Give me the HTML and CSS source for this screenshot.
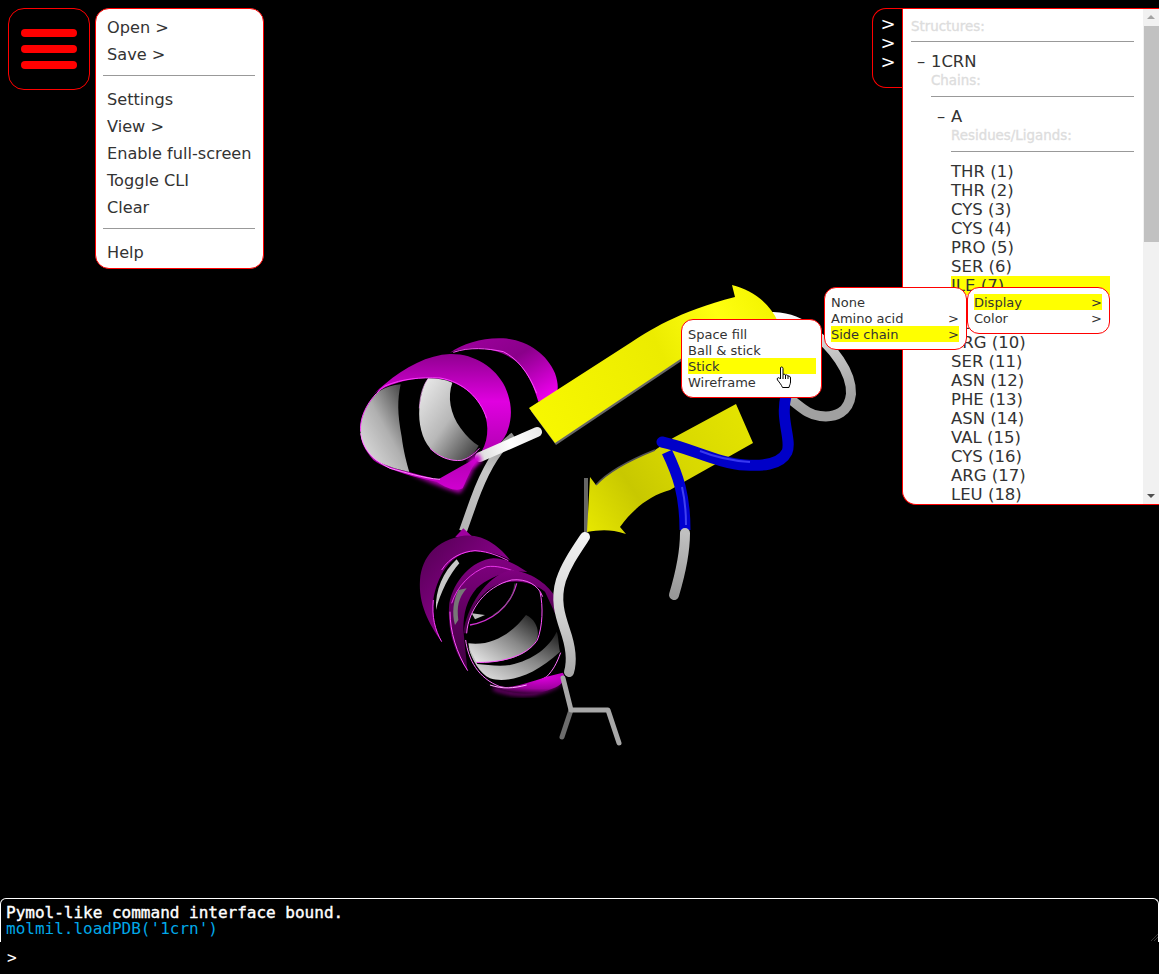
FILE: index.html
```html
<!DOCTYPE html>
<html lang="en">
<head>
<meta charset="utf-8">
<title>Molmil</title>
<link rel="stylesheet" href="styles.css">
</head>
<body>
<div class="app">
  <svg class="viewport" width="1159" height="974" viewBox="0 0 1159 974" aria-hidden="true">
    <defs>
      <filter id="soft" x="-30%" y="-30%" width="160%" height="160%"><feGaussianBlur stdDeviation="7"/></filter>
      <filter id="soft2" x="-10%" y="-10%" width="120%" height="120%"><feGaussianBlur stdDeviation="2"/></filter>
      <linearGradient id="gYel1" x1="529" y1="420" x2="770" y2="300" gradientUnits="userSpaceOnUse">
        <stop offset="0" stop-color="#f8f800"/><stop offset=".55" stop-color="#ecec00"/><stop offset=".8" stop-color="#ffff10"/><stop offset="1" stop-color="#f4f400"/>
      </linearGradient>
      <linearGradient id="gYel2" x1="590" y1="530" x2="750" y2="420" gradientUnits="userSpaceOnUse">
        <stop offset="0" stop-color="#e6e600"/><stop offset=".3" stop-color="#c8c800"/><stop offset=".6" stop-color="#d8d800"/><stop offset="1" stop-color="#e4e400"/>
      </linearGradient>
      <linearGradient id="gMag1" x1="0" y1="0" x2="1" y2="1">
        <stop offset="0" stop-color="#a000a0"/><stop offset=".45" stop-color="#8a008a"/><stop offset="1" stop-color="#ff00ff"/>
      </linearGradient>
      <linearGradient id="gMag2" x1="0" y1="0" x2="0" y2="1">
        <stop offset="0" stop-color="#900090"/><stop offset=".35" stop-color="#e000e0"/><stop offset=".75" stop-color="#b000b0"/><stop offset="1" stop-color="#d000d0"/>
      </linearGradient>
      <linearGradient id="gMagDark" x1="0" y1="0" x2="0" y2="1">
        <stop offset="0" stop-color="#800080"/><stop offset=".5" stop-color="#600060"/><stop offset="1" stop-color="#400040"/>
      </linearGradient>
      <linearGradient id="gMagDark2" x1="0" y1="0" x2="1" y2="1">
        <stop offset="0" stop-color="#500050"/><stop offset=".6" stop-color="#8a008a"/><stop offset="1" stop-color="#500050"/>
      </linearGradient>
      <radialGradient id="gMagBot" cx=".7" cy=".2" r=".8">
        <stop offset="0" stop-color="#e000e0"/><stop offset=".7" stop-color="#a000a0"/><stop offset="1" stop-color="#400040"/>
      </radialGradient>
      <linearGradient id="gW1" x1="0" y1="1" x2="1" y2="0">
        <stop offset="0" stop-color="#e8e8e8"/><stop offset=".5" stop-color="#b0b0b0"/><stop offset="1" stop-color="#303030"/>
      </linearGradient>
      <linearGradient id="gW2" x1="0" y1="0" x2="1" y2="1">
        <stop offset="0" stop-color="#eeeeee"/><stop offset=".5" stop-color="#b8b8b8"/><stop offset="1" stop-color="#303030"/>
      </linearGradient>
      <linearGradient id="gW3" x1="0" y1="1" x2="1" y2="0">
        <stop offset="0" stop-color="#f0f0f0"/><stop offset=".55" stop-color="#888"/><stop offset="1" stop-color="#181818"/>
      </linearGradient>
      <linearGradient id="gTube" x1="587" y1="535" x2="570" y2="675" gradientUnits="userSpaceOnUse">
        <stop offset="0" stop-color="#f4f4f4"/><stop offset=".6" stop-color="#d0d0d0"/><stop offset="1" stop-color="#a8a8a8"/>
      </linearGradient>
      <linearGradient id="gLoop" x1="775" y1="315" x2="800" y2="410" gradientUnits="userSpaceOnUse">
        <stop offset="0" stop-color="#ffffff"/><stop offset=".5" stop-color="#c8c8c8"/><stop offset="1" stop-color="#a0a0a0"/>
      </linearGradient>
      <linearGradient id="gEnd" x1="685" y1="533" x2="674" y2="595" gradientUnits="userSpaceOnUse">
        <stop offset="0" stop-color="#c0c0c0"/><stop offset="1" stop-color="#989898"/>
      </linearGradient>
      <linearGradient id="gWhite" x1="480" y1="457" x2="542" y2="430" gradientUnits="userSpaceOnUse">
        <stop offset="0" stop-color="#dddddd"/><stop offset=".5" stop-color="#ffffff"/><stop offset="1" stop-color="#e8e8e8"/>
      </linearGradient>
      <linearGradient id="gStem" x1="510" y1="437" x2="463" y2="530" gradientUnits="userSpaceOnUse">
        <stop offset="0" stop-color="#8c8c8c"/><stop offset=".4" stop-color="#c8c8c8"/><stop offset="1" stop-color="#b4b4b4"/>
      </linearGradient>
    </defs>

    <!-- loop and gray connectors -->
    <path d="M773 317 C790 318 800 322 812 332 C832 346 852 372 851 394 C849 412 836 418 820 416 C808 415 800 406 790 399" fill="none" stroke="url(#gLoop)" stroke-width="10" stroke-linecap="round"/>
    <path d="M514 436 C494 450 482 478 474 500 L463 531" fill="none" stroke="url(#gStem)" stroke-width="8"/>

    <!-- upper helix, zoom coordinates -->
    <g transform="translate(340 280) scale(.33333)">
      <path d="M200 575 C250 600 300 620 360 640 C385 610 395 570 420 535 L300 590Z" fill="#b000b0" filter="url(#soft)"/>
      <path d="M330 218 C370 190 430 172 490 175 C560 180 620 220 645 280 C655 310 655 325 650 345 L595 365 C585 330 570 290 540 255 C510 225 460 205 410 205 C380 205 350 210 330 218Z" fill="url(#gMag1)"/>
      <path d="M62 455 C60 400 85 350 135 312 C195 260 265 225 330 222 C400 220 465 260 495 320 C515 365 520 410 500 460 C480 500 450 520 420 535 C395 555 385 590 368 625 C350 635 320 625 290 605 C240 595 150 575 100 540 C75 510 62 490 62 455Z" fill="url(#gMag2)"/>
      <path d="M95 348 C120 322 190 295 270 293 C340 295 400 330 430 390 C450 440 445 490 415 530 L340 572 L295 598 C260 590 220 580 205 575 C150 565 110 545 90 515 C65 480 55 450 62 430 C65 400 80 365 95 348Z" fill="#000"/>
      <path d="M62 460 C58 420 75 375 115 335 C135 322 160 315 182 313 C172 360 172 400 185 470 C190 510 200 550 208 576 C170 568 125 555 100 535 C75 510 65 485 62 460Z" fill="url(#gW1)"/>
      <path d="M265 295 C290 295 315 298 337 308 C322 350 330 400 362 445 C380 470 398 487 416 497 C400 525 385 535 365 541 C330 545 295 530 270 505 C245 475 235 430 238 385 C242 345 250 315 265 295Z" fill="url(#gW2)"/>
      <path d="M62 455 C58 410 85 355 135 318 C190 295 240 292 300 294 C370 305 420 355 440 415" fill="none" stroke="#ff40ff" stroke-width="3"/>
      <path d="M238 385 C240 345 250 315 265 295" fill="none" stroke="#ffb0ff" stroke-width="2"/>
      <path d="M270 505 C295 530 330 545 365 541 C385 535 400 525 418 505" fill="none" stroke="#ff60ff" stroke-width="3"/>
      <path d="M62 460 C70 510 100 540 150 565 C190 575 250 595 300 598" fill="none" stroke="#ff90ff" stroke-width="3"/>
      <path d="M340 217 C390 200 440 205 490 215 C530 235 565 275 590 340" fill="none" stroke="#ff50ff" stroke-width="3"/>
    </g>

    <!-- first strand -->
    <path d="M531 411 L556 445 L683 360 L640 344Z" fill="#666"/>
    <path d="M529 408 L627 345 C650 330 677 312 735 297 L732 285 C752 290 770 303 778 322 L740 345 L682 358 L555 443Z" fill="url(#gYel1)"/>

    <!-- white tube into strand -->
    <path d="M480 457 L537 432" fill="none" stroke="url(#gWhite)" stroke-width="10" stroke-linecap="round"/>
    <path d="M478 453 L482 461 L472 468 L468 460Z" fill="#d000d0" filter="url(#soft2)"/>

    <!-- second strand -->
    <path d="M586 478 L586 532" stroke="#666" stroke-width="4" fill="none"/>
    <path d="M736 404 L753 443 L682 483 L670 490 C650 495 632 510 620 527 L626 534 C610 529 600 530 587 532 L590 477 L596 485 C605 475 625 462 655 450 L673 438Z" fill="url(#gYel2)"/>
    <path d="M596 485 C605 475 625 462 655 450" fill="none" stroke="#555" stroke-width="1.5"/>

    <!-- blue tube -->
    <path d="M667 452 C678 475 685 495 685 530" fill="none" stroke="#0000d0" stroke-width="11"/>
    <path d="M682 487 C685 500 686 515 686 525" fill="none" stroke="#4040f0" stroke-width="2"/>
    <path d="M786 396 C780 420 792 440 787 452 C780 466 760 466 745 465 C720 464 690 448 662 442" fill="none" stroke="#0000c8" stroke-width="11" stroke-linecap="round"/>
    <path d="M700 451 C720 459 735 461 750 462" fill="none" stroke="#3838f0" stroke-width="2"/>
    <path d="M685 533 C685 552 680 575 674 595" fill="none" stroke="url(#gEnd)" stroke-width="10" stroke-linecap="round"/>

    <!-- lower helix, zoom coordinates -->
    <g transform="translate(400 500) scale(.33333)">
      <path d="M165 112 L190 85 L215 108Z" fill="#a000a0"/>
      <path d="M60 240 C65 170 110 120 190 107 C250 100 300 140 330 180 C290 160 250 150 210 155 C150 165 110 230 100 300 C95 350 105 390 125 425 C85 370 55 310 60 240Z" fill="url(#gMagDark2)"/>
      <path d="M170 178 C130 215 105 270 108 330 C120 280 150 220 178 190Z" fill="#c8c8c8"/>
      <path d="M100 300 C95 350 105 390 125 425" fill="none" stroke="#ff40ff" stroke-width="3"/>
      <path d="M125 210 C150 170 190 155 225 152 C270 155 300 170 325 182" fill="none" stroke="#ff40ff" stroke-width="3"/>
      <path d="M148 310 C160 245 215 180 280 175 C320 175 350 195 382 216 C330 208 270 228 230 265 C200 300 190 340 190 390 C195 440 200 490 203 512 C165 465 140 390 148 310Z" fill="url(#gMagDark)"/>
      <path d="M150 335 C150 395 170 460 203 512" fill="none" stroke="#ff50ff" stroke-width="3"/>
      <path d="M155 310 C170 260 215 215 260 200 C290 196 320 205 345 215" fill="none" stroke="#ff40ff" stroke-width="2.5"/>
      <path d="M175 270 C160 300 155 340 165 375 L175 360 C170 320 175 295 200 265Z" fill="#777"/>
      <path d="M215 340 L255 345 L225 358Z" fill="#bdbdbd"/>
      <path d="M210 375 C270 365 330 325 350 250" fill="none" stroke="#d030d0" stroke-width="4"/>
      <path d="M345 250 C340 290 320 320 280 345" fill="none" stroke="#606060" stroke-width="2"/>
      <path d="M190 400 C200 320 260 225 335 210 C390 215 440 250 462 285 L465 340 L435 275 C390 240 330 235 280 260 C235 285 205 340 200 400Z" fill="url(#gMagDark)"/>
      <path d="M200 400 C205 330 255 260 335 240 C380 235 415 255 428 290" fill="none" stroke="#ff60ff" stroke-width="3"/>
      <path d="M205 430 C280 440 340 395 378 345 C410 360 420 395 410 420 C390 460 330 490 225 487 C215 470 207 450 205 430Z" fill="url(#gW3)"/>
      <path d="M225 487 C300 490 380 470 412 420 C428 380 430 320 420 275" fill="none" stroke="#ff50ff" stroke-width="3"/>
      <path d="M205 440 C215 480 240 520 270 535 C320 550 400 530 480 455 C475 430 475 405 470 395 C450 440 400 480 330 495 C300 500 260 495 232 492Z" fill="url(#gW3)"/>
      <path d="M197 420 C205 480 235 535 300 560 C340 570 400 555 440 530 C460 510 470 490 482 458" fill="none" stroke="#ff70ff" stroke-width="3"/>
      <path d="M280 565 C340 590 420 590 480 550" fill="none" stroke="#900090" stroke-width="10" filter="url(#soft)"/>
      <path d="M250 545 C300 575 350 560 440 530 L488 518 C500 530 490 555 460 565 C420 585 360 585 310 570 C285 562 265 555 250 545Z" fill="url(#gMagBot)"/>
      <path d="M270 555 C310 568 340 565 380 555" fill="none" stroke="#ffb0ff" stroke-width="3"/>
    </g>

    <!-- tube past lower helix and side chain -->
    <path d="M571 710 L562 737" fill="none" stroke="#6c6c6c" stroke-width="5" stroke-linecap="round"/>
    <path d="M563 678 L571 710 L608 710 L619 743" fill="none" stroke="#a8a8a8" stroke-width="5" stroke-linecap="round" stroke-linejoin="round"/>
    <path d="M585 537 C575 552 566 565 561 580 C555 600 560 615 565 630 C572 650 572 662 569 672" fill="none" stroke="url(#gTube)" stroke-width="10" stroke-linecap="round"/>
  </svg>

  <div class="top">
    <div class="left-group">
      <div class="hamburger"><span class="bar"></span><span class="bar"></span><span class="bar"></span></div>
      <nav class="main-menu">
        <div class="mi">Open &gt;</div>
        <div class="mi">Save &gt;</div>
        <div class="sep"></div>
        <div class="mi">Settings</div>
        <div class="mi">View &gt;</div>
        <div class="mi">Enable full-screen</div>
        <div class="mi">Toggle CLI</div>
        <div class="mi">Clear</div>
        <div class="sep"></div>
        <div class="mi">Help</div>
      </nav>
    </div>
    <div class="right-group">
      <div class="tab"><span>&gt;</span><span>&gt;</span><span>&gt;</span></div>
      <aside class="panel">
        <div class="tree">
          <div class="head">Structures:</div>
          <div class="rule"></div>
          <div class="node"><span class="dash">–</span>1CRN</div>
          <div class="nest">
            <div class="head">Chains:</div>
            <div class="rule"></div>
            <div class="node"><span class="dash">–</span>A</div>
            <div class="nest">
              <div class="head">Residues/Ligands:</div>
              <div class="rule"></div>
              <div class="residues">
                <div class="res">THR (1)</div>
                <div class="res">THR (2)</div>
                <div class="res">CYS (3)</div>
                <div class="res">CYS (4)</div>
                <div class="res">PRO (5)</div>
                <div class="res">SER (6)</div>
                <div class="res res-on">ILE (7)</div>
                <div class="res">VAL (8)</div>
                <div class="res">ALA (9)</div>
                <div class="res">ARG (10)</div>
                <div class="res">SER (11)</div>
                <div class="res">ASN (12)</div>
                <div class="res">PHE (13)</div>
                <div class="res">ASN (14)</div>
                <div class="res">VAL (15)</div>
                <div class="res">CYS (16)</div>
                <div class="res">ARG (17)</div>
                <div class="res">LEU (18)</div>
              </div>
            </div>
          </div>
        </div>
        <div class="scrollbar">
          <span class="arrow-up"></span>
          <span class="thumb"></span>
          <span class="arrow-down"></span>
        </div>
      </aside>
    </div>
  </div>

  <div class="ctx ctx-a">
    <div class="ci ci-on"><span>Display</span><span>&gt;</span></div>
    <div class="ci"><span>Color</span><span>&gt;</span></div>
  </div>
  <div class="ctx ctx-b">
    <div class="ci"><span>None</span></div>
    <div class="ci"><span>Amino acid</span><span>&gt;</span></div>
    <div class="ci ci-on"><span>Side chain</span><span>&gt;</span></div>
  </div>
  <div class="ctx ctx-c">
    <div class="ci"><span>Space fill</span></div>
    <div class="ci"><span>Ball &amp; stick</span></div>
    <div class="ci ci-on"><span>Stick</span></div>
    <div class="ci"><span>Wireframe</span></div>
  </div>

  <svg class="cursor" width="16" height="23" viewBox="0 0 16 23" aria-hidden="true">
    <path d="M4.5 1.5 C5.5 .5 7 1 7 2.5 L7 8.5 C8 8 9 8.2 9.5 9 C10.5 8.6 11.5 9 12 10 C13 9.8 14.5 10.4 14.5 12 L14.5 16 C14.5 18 13.5 19 13 21.5 L6.5 21.5 C5.5 19 3.5 16.5 1.5 14 C.5 12.5 2 11 3.5 12 L4.5 13Z" fill="#fff" stroke="#000" stroke-width="1" stroke-linejoin="round"/>
    <path d="M7 8.5 L7 13 M9.5 9 L9.5 13 M12 10 L12 13" fill="none" stroke="#000" stroke-width="1"/>
  </svg>

  <section class="console">
    <div class="log">
      <div class="log-sys">Pymol-like command interface bound.</div>
      <div class="log-cmd">molmil.loadPDB('1crn')</div>
      <span class="grip"></span>
    </div>
    <div class="prompt">&gt;</div>
  </section>
</div>
</body>
</html>
```

FILE: styles.css
```css
* { box-sizing: border-box; }
html, body { margin: 0; padding: 0; background: #000; overflow: hidden; }
.app {
  position: relative;
  width: 1159px;
  height: 974px;
  display: flex;
  flex-direction: column;
  background: #000;
  font-family: "DejaVu Sans", Verdana, sans-serif;
}
.viewport { position: absolute; left: 0; top: 0; }
.top {
  position: relative;
  flex: 1;
  display: flex;
  justify-content: space-between;
  align-items: flex-start;
  padding: 8px 0 0 8px;
}
.left-group { display: flex; gap: 5px; align-items: flex-start; }
.hamburger {
  width: 82px;
  height: 82px;
  border: 1px solid #f00;
  border-radius: 16px;
  background: #000;
  display: flex;
  flex-direction: column;
  gap: 8px;
  padding: 20px 12px 0;
}
.bar { display: block; height: 8px; width: 56px; border-radius: 4px; background: #f00; }
.main-menu {
  width: 169px;
  height: 261px;
  background: #fff;
  border: 1px solid #f00;
  border-radius: 14px;
  padding: 5px 8px 0 7px;
  color: #333;
  font-size: 16.15px;
}
.mi { height: 27px; line-height: 27px; padding-left: 4px; white-space: nowrap; }
.sep { height: 18px; padding-top: 7px; }
.sep::before { content: ""; display: block; width: 100%; height: 1px; background: #999; }
.right-group { display: flex; align-items: flex-start; }
.tab {
  width: 31px;
  height: 80px;
  margin-right: -1px;
  border: 1px solid #f00;
  border-right: 0;
  border-radius: 14px 0 0 14px;
  background: #000;
  color: #fff;
  font-size: 18px;
  display: flex;
  flex-direction: column;
  align-items: center;
  padding-top: 5px;
  line-height: 19px;
}
.panel {
  position: relative;
  width: 257px;
  height: 497px;
  background: #fff;
  border: 1px solid #f00;
  border-right: 0;
  border-radius: 0 0 0 14px;
  display: flex;
  overflow: hidden;
}
.tree { flex: 1; padding: 8px 9px 0 8px; min-width: 0; overflow: hidden; color: #333; }
.head {
  font-size: 13.4px;
  color: #ddd;
  -webkit-text-stroke: .35px #ddd;
  height: 19px;
  line-height: 19px;
  white-space: nowrap;
}
.rule { height: 1px; background: #999; margin-top: 5px; }
.node {
  font-size: 16.4px;
  color: #333;
  height: 19px;
  line-height: 19px;
  margin-top: 10px;
  padding-left: 20px;
  position: relative;
}
.dash { position: absolute; left: 6px; top: 0; }
.nest { padding-left: 20px; }
.nest > .rule { margin-top: 6px; }
.residues { margin-top: 10px; }
.res { height: 19px; line-height: 19px; font-size: 16.5px; color: #333; white-space: nowrap; }
.res-on { background: #ff0; width: 159px; }
.scrollbar {
  width: 16px;
  flex: none;
  background: #f1f1f1;
  position: relative;
  display: flex;
  flex-direction: column;
  align-items: center;
}
.arrow-up { margin-top: 6px; width: 0; height: 0; border: 4px solid transparent; border-top: 0; border-bottom: 4px solid #a3a3a3; }
.thumb { display: block; width: 15px; height: 216px; margin-top: 7px; background: #c1c1c1; }
.arrow-down { margin-top: auto; margin-bottom: 6px; width: 0; height: 0; border: 4px solid transparent; border-bottom: 0; border-top: 4px solid #505050; }
.ctx {
  position: absolute;
  background: #fff;
  border: 1px solid #f00;
  border-radius: 12px;
  padding: 6px 7px 6px 6px;
  font-size: 13px;
  color: #333;
}
.ctx-a { left: 967px; top: 287px; width: 143px; height: 47px; }
.ctx-b { left: 824px; top: 287px; width: 143px; height: 63px; }
.ctx-c { left: 681px; top: 319px; width: 141px; height: 79px; padding-right: 5px; }
.ci { height: 16px; line-height: 18px; display: flex; justify-content: space-between; white-space: nowrap; }
.ci-on { background: #ff0; }
.cursor { position: absolute; left: 776px; top: 366px; }
.console { position: relative; height: 76px; flex: none; font-family: "DejaVu Sans Mono", "Liberation Mono", monospace; font-size: 16px; }
.log {
  position: relative;
  height: 44px;
  border: 1px solid #fff;
  border-bottom: 0;
  border-radius: 6px 6px 0 0;
  padding: 6px 0 0 5px;
  line-height: 16px;
}
.log-sys { color: #fff; -webkit-text-stroke: .4px #fff; }
.log-cmd { color: #00a8e8; }
.grip {
  position: absolute;
  right: 0;
  bottom: 1px;
  width: 8px;
  height: 7px;
  background: linear-gradient(135deg, transparent 48%, #aaa 50%, transparent 55%, transparent 72%, #888 75%, transparent 80%);
}
.prompt { color: #fff; padding-left: 7px; margin-top: 8px; line-height: 16px; }
```
